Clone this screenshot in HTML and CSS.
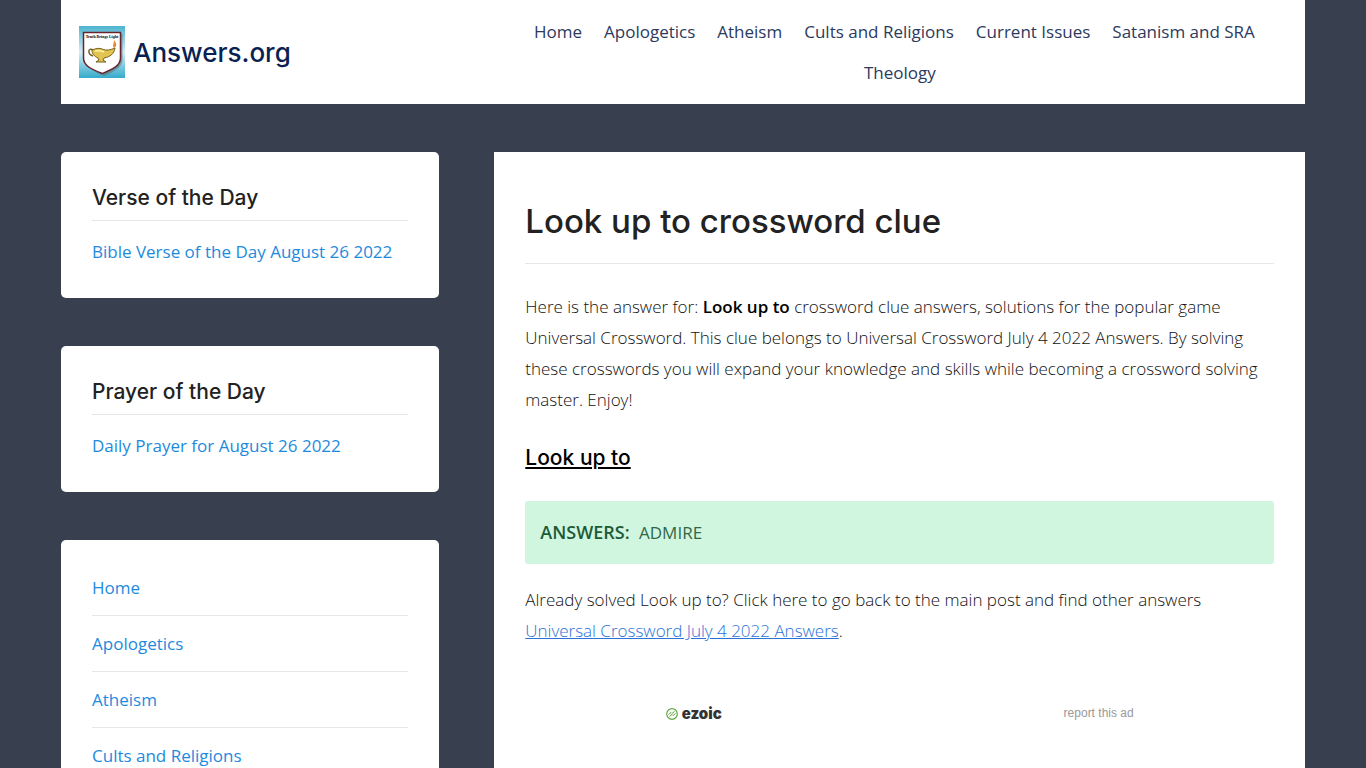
FILE: index.html
```html
<!DOCTYPE html>
<html lang="en">
<head>
    <meta charset="UTF-8">
    <meta name="viewport" content="width=device-width, initial-scale=1.0">
    <title>Look up to crossword clue - Answers.org</title>
    <link rel="stylesheet" href="styles.css">
</head>
<body>
    <div class="container">
        <header class="site-header">
            <a class="brand" href="#">
                <svg class="brand-logo" viewBox="0 0 46 52" aria-hidden="true">
                    <defs>
                        <linearGradient id="sky" x1="0" y1="0" x2="0" y2="1">
                            <stop offset="0" stop-color="#4db4d0"/>
                            <stop offset="0.5" stop-color="#d3edf4"/>
                            <stop offset="1" stop-color="#35abcb"/>
                        </linearGradient>
                    </defs>
                    <rect width="46" height="52" fill="url(#sky)"/>
                    <path d="M6 8H43.500V34C43 42 34 46 25 50C15 46 7 42 6 34Z" fill="#5c7780" opacity="0.6"/>
                    <path d="M4.500 6.500H41.500V32C41.500 40 33 43.500 23.500 47.500C13 43.500 4.500 40 4.500 32Z" fill="#fff" stroke="#67242d" stroke-width="1.500"/>
                    <text x="23" y="12" text-anchor="middle" class="logo-text">Truth Brings Light</text>
                    <path d="M14 24C9 21 8 28 14 30" fill="none" stroke="#75601c" stroke-width="1.500"/>
                    <path d="M13 24C18 22 20 22 23 23C28 25 31 24 36 22C35 28 31 31 25 32L24 34L27 36H17L20 34L19 32C15 30 13 28 13 24Z" fill="#e2c452" stroke="#75601c"/>
                    <path d="M16 25Q21 24 25 26" fill="none" stroke="#fff3a4" stroke-width="1.500"/>
                    <path d="M35 22C33 19 35 18 35 14C38 18 38 20 35 22Z" fill="#e98732"/>
                </svg>
                <span class="brand-name">Answers.org</span>
            </a>
            <nav class="main-nav" aria-label="Main">
                <ul>
                    <li><a href="#">Home</a></li>
                    <li><a href="#">Apologetics</a></li>
                    <li><a href="#">Atheism</a></li>
                    <li><a href="#">Cults and Religions</a></li>
                    <li><a href="#">Current Issues</a></li>
                    <li><a href="#">Satanism and SRA</a></li>
                    <li><a href="#">Theology</a></li>
                </ul>
            </nav>
        </header>

        <div class="layout">
            <aside class="sidebar">
                <section class="widget">
                    <h2>Verse of the Day</h2>
                    <a href="#">Bible Verse of the Day August 26 2022</a>
                </section>
                <section class="widget">
                    <h2>Prayer of the Day</h2>
                    <a href="#">Daily Prayer for August 26 2022</a>
                </section>
                <section class="widget">
                    <ul class="menu">
                        <li><a href="#">Home</a></li>
                        <li><a href="#">Apologetics</a></li>
                        <li><a href="#">Atheism</a></li>
                        <li><a href="#">Cults and Religions</a></li>
                    </ul>
                </section>
            </aside>

            <main class="content">
                <h1>Look up to crossword clue</h1>
                <p>Here is the answer for: <strong>Look up to</strong> crossword clue answers, solutions for the popular game Universal Crossword. This clue belongs to Universal Crossword July 4 2022 Answers. By solving these crosswords you will expand your knowledge and skills while becoming a crossword solving master. Enjoy!</p>
                <h3>Look up to</h3>
                <div class="answer"><b>ANSWERS:</b> <span>ADMIRE</span></div>
                <p>Already solved Look up to? Click here to go back to the main post and find other answers <a href="#">Universal Crossword July 4 2022 Answers</a>.</p>
                <div class="ad-footer">
                    <a class="ezoic" href="#">
                        <svg class="ezoic-icon" viewBox="0 0 12 12" aria-hidden="true">
                            <circle cx="6" cy="6" r="5.300" fill="none" stroke="#5fa93f" stroke-width="1.200"/>
                            <path d="M2.500 6.500L5 4.500L6 5.500L8.500 3.500M3.500 8.500L6 6.500L7 7.500L9.500 5.500" fill="none" stroke="#5fa93f" stroke-width="1"/>
                        </svg>
                        <span>ezoic</span>
                    </a>
                    <a class="report" href="#">report this ad</a>
                </div>
            </main>
        </div>
    </div>
</body>
</html>
```
FILE: styles.css
```css
* {
    margin: 0;
    padding: 0;
    box-sizing: border-box;
}

body {
    font-family: "Open Sans", sans-serif;
    font-size: 17px;
    line-height: 31px;
    color: #222;
    background: #384050;
}

a {
    color: #1e8ade;
    text-decoration: none;
}

ul {
    list-style: none;
}

h1, h2, h3, .brand-name {
    font-family: "Inter", sans-serif;
    font-weight: 500;
    color: #222;
}

.container {
    max-width: 1366px;
    margin: 0 auto;
    padding: 0 61px;
}

.site-header {
    display: flex;
    align-items: center;
    justify-content: space-between;
    padding: 11px 18px;
    background: #fff;
}

.brand {
    display: flex;
    align-items: center;
    gap: 8px;
}

.brand-logo {
    width: 46px;
    height: 52px;
}

.logo-text {
    font-family: "Liberation Serif", serif;
    font-size: 4px;
    font-weight: bold;
}

.brand-name {
    font-size: 26px;
    color: #0a1f52;
}

.main-nav {
    width: 65%;
}

.main-nav ul {
    display: flex;
    flex-wrap: wrap;
    justify-content: center;
}

.main-nav li {
    padding: 0 11px;
    line-height: 41px;
}

.main-nav li:last-child {
    padding-right: 0;
}

.main-nav a {
    color: #2b3a5e;
}

.layout {
    display: grid;
    grid-template-columns: 7fr 15fr;
    gap: 55px;
    margin-top: 48px;
}

.sidebar {
    display: flex;
    flex-direction: column;
    gap: 48px;
}

.widget {
    padding: 32px 31px 31px;
    background: #fff;
    border-radius: 5px;
}

.widget h2 {
    margin-bottom: 15px;
    padding-bottom: 8px;
    border-bottom: 1px solid #e6e6e6;
    font-size: 21px;
    line-height: 28px;
}

.menu li + li {
    margin-top: 12px;
    padding-top: 12px;
    border-top: 1px solid #e6e6e6;
}

.content {
    padding: 48px 31px;
    background: #fff;
}

.content h1 {
    margin-bottom: 27px;
    padding-bottom: 21px;
    border-bottom: 1px solid #e6e6e6;
    font-size: 33px;
    line-height: 42px;
}

.content p {
    font-weight: 300;
    color: #111;
}

.content strong {
    font-weight: 600;
    color: #000;
}

.content h3 {
    margin: 29px 0;
    font-size: 21px;
    line-height: 28px;
    color: #000;
    text-decoration: underline;
}

.content p a {
    color: #2a72d8;
    text-decoration: underline;
}

.answer {
    margin-bottom: 20px;
    padding: 16px 15px;
    border-radius: 3px;
    background: #d1f6e0;
    color: #2f6848;
}

.answer b {
    margin-right: 5px;
    font-size: 18px;
    font-weight: 600;
    color: #1d5a38;
}

.ad-footer {
    display: flex;
    align-items: center;
    justify-content: space-between;
    max-width: 468px;
    margin: 52px auto 0;
}

.ezoic {
    display: flex;
    align-items: center;
    gap: 4px;
    font-family: "Inter", sans-serif;
    font-size: 15px;
    font-weight: 900;
    color: #333;
}

.ezoic-icon {
    width: 12px;
    height: 12px;
}

.report {
    font-family: "Liberation Sans", Arial, sans-serif;
    font-size: 12px;
    color: #999;
}
```
